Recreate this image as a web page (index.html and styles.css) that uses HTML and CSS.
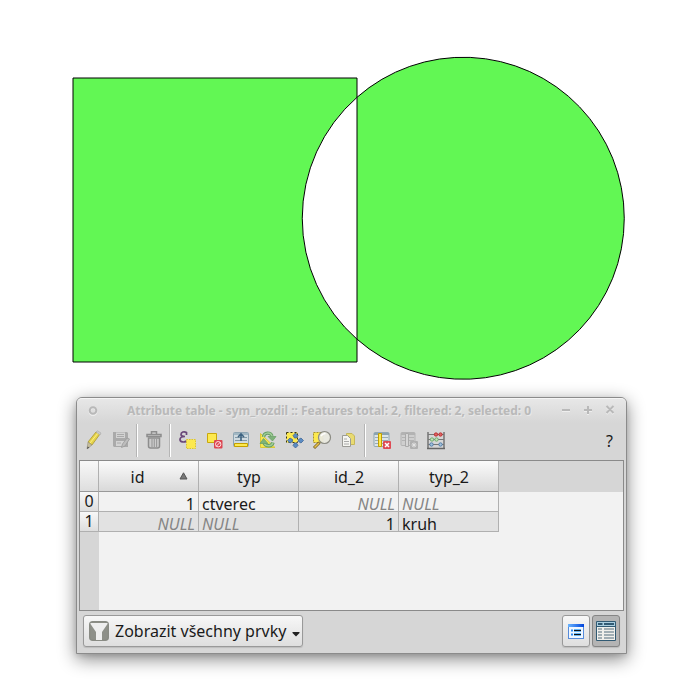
FILE: index.html
```
<!DOCTYPE html>
<html lang="cs">
<head>
<meta charset="utf-8">
<title>Attribute table</title>
<link rel="stylesheet" href="styles.css">
</head>
<body>
<svg class="map" width="700" height="397" viewBox="0 0 700 397">
  <path d="M73 78H357V97.300A161 161 0 0 0 357 339.200V362H73Z"/>
  <path d="M357 97.300A161 161 0 1 1 357 339.200Z"/>
</svg>
<section class="window">
  <header class="titlebar">
    <svg class="menu-dot" width="12" height="12"><circle cx="6" cy="6.500" r="3.500"/><circle class="ring" cx="6" cy="5.500" r="3.300"/></svg>
    <h1>Attribute table - sym_rozdil :: Features total: 2, filtered: 2, selected: 0</h1>
    <svg class="controls" width="56" height="12"><path class="lo" d="M2 6H10M24 6H32M28 2V10M46.500 2L53.500 9M53.500 2L46.500 9"/><path d="M2 5H10M24 5H32M28 1V9M46.500 1L53.500 8M53.500 1L46.500 8"/></svg>
  </header>
  <nav class="toolbar">
    <span class="tool"><svg width="20" height="20"><path d="M4 12L12 2L16 4L8 15Z" fill="#e4d34b" stroke="#aa9630" stroke-width=".8"/><path d="M6 13L14 3" stroke="#fff083"/><path d="M12 2L13.500 .8L17 3L16 5Z" fill="#ccc" stroke="#aaa" stroke-width=".6"/><path d="M4 12L8 15L3 19Z" fill="#c5bd9c" stroke="#8c876f" stroke-width=".5"/><path d="M3.500 16.500L5.500 17.500L3 19Z" fill="#555"/></svg></span>
    <span class="tool"><svg width="20" height="20"><path d="M2 2H16L17 3V17H3L2 16Z" fill="#aaa"/><path d="M5 2.500H14V8H5ZM5 11H14V16H5Z" fill="#d3d3d3"/><path d="M6 4.500H13M6 6.500H13M6 13H10" stroke="#aaa"/><path d="M16 8L18.500 9L14 16L10.500 17.500L11.500 14Z" fill="#bdbdbd" stroke="#999" stroke-width=".8"/></svg></span>
    <i class="sep"></i>
    <span class="tool"><svg width="20" height="20"><path d="M7.500 4V1.800H12.500V4M3 4.500H17V6.500H3Z" fill="none" stroke="#8d8d8d" stroke-width="1.500"/><path d="M4.500 8V16Q4.500 18 6.500 18H13.500Q15.500 18 15.500 16V8Z" fill="#ccc" stroke="#8d8d8d" stroke-width="1.500"/><path d="M8 9V17M10.300 9V17M12.600 9V17" stroke="#999" stroke-width="1.100"/></svg></span>
    <i class="sep"></i>
    <span class="tool"><svg width="20" height="20"><path d="M9.500 5V2.500C7 1 4 2 4 4.500C4 6 6 6.500 8 6.500C5 6.500 3 7.500 3 9.500C3 12.500 7.500 12.500 9.500 11" fill="none" stroke="#6a4879" stroke-width="1.700"/><path d="M9.500 9.500H18.500V18.500H9.500Z" fill="#fce94f" stroke="#dcc52c" stroke-dasharray="1.500 1"/></svg></span>
    <span class="tool"><svg width="20" height="20"><path d="M3.500 3.500H12.500V12.500H3.500Z" fill="#fce94f" stroke="#c9a80c"/><rect x="10" y="10" width="8.500" height="8.500" rx="1" fill="#dc4450"/><circle cx="14.200" cy="14.200" r="2.700" fill="none" stroke="#ffe2e2"/><path d="M12 16.500L16.500 12" stroke="#ffe2e2"/></svg></span>
    <span class="tool"><svg width="20" height="20"><rect x="2.500" y="2.500" width="15" height="14" rx="1" fill="#cfdae0" stroke="#8ea5b3"/><path d="M3 4H17" stroke="#a1b7c3" stroke-width="2"/><path d="M4 7.500H16M4 10.500H16" stroke="#8198a6"/><path d="M10 11V4M7 7L10 4L13 7" fill="none" stroke="#3d6381" stroke-width="1.600"/><path d="M3.500 13.500H16.500V16.500H3.500Z" fill="#fce94f" stroke="#c4a000"/></svg></span>
    <span class="tool"><svg width="20" height="20"><path d="M2.500 3.500V17.500H17Z" fill="#f8e650" stroke="#dac838"/><path d="M5.500 7C6 2 12.500 2 14 6M15 12.500C14 16.500 8 17 6 13" fill="none" stroke="#659f63" stroke-width="3.400"/><path d="M5.500 7C6 2 12.500 2 14 6M15 12.500C14 16.500 8 17 6 13" fill="none" stroke="#a1cc98" stroke-width="1.500"/><path d="M10 6.500H18L14.500 11ZM2 13.500L5.500 8.500L10 13.500Z" fill="#7eb27a" stroke="#659f63" stroke-width=".7"/></svg></span>
    <span class="tool"><svg width="20" height="20"><path d="M1.500 2.500H12.500V12.500H1.500Z" fill="#fce94f" stroke="#393510" stroke-dasharray="2 2"/><g fill="#5b8cc3" stroke="#375f90" stroke-width=".7"><path d="M10.500 3L13 5.500L11.500 8H9.500L8 5.500Z"/><path d="M10.500 18L13 15.500L11.500 13H9.500L8 15.500Z"/><path d="M2.500 10.500L5 8L7.500 9.500V11.500L5 13Z"/><path d="M18.500 10.500L16 8L13.500 9.500V11.500L16 13Z"/></g></svg></span>
    <span class="tool"><svg width="20" height="20"><path d="M1.500 2.500H11V12.500H1.500Z" fill="#fce94f" stroke="#a8942b" stroke-dasharray="2 1"/><path d="M7.500 12.500L2 18" stroke="#765e24" stroke-width="3"/><path d="M7 13L2.500 17.500" stroke="#e8c24b" stroke-width="1.600"/><circle cx="12.500" cy="7.500" r="6" fill="#e9e9df" fill-opacity=".94" stroke="#8b8b83" stroke-width="1.200"/><path d="M9 6Q10.500 3.500 13.500 3.500" fill="none" stroke="#fff" stroke-width="1.500"/></svg></span>
    <span class="tool"><svg width="20" height="20"><path d="M7.500 3.500H13L15.500 6V14.500H7.500Z" fill="#e9db72" stroke="#c6b85b"/><path d="M3.500 5.500H8.500L11.500 8.500V16.500H3.500Z" fill="#f5f5f1" stroke="#9b9b96"/><path d="M5 9H8M5 11.500H10M5 14H10" stroke="#aaa"/></svg></span>
    <i class="sep"></i>
    <span class="tool"><svg width="20" height="20"><rect x="2" y="2.500" width="15" height="14" rx="1" fill="#dce4e8" stroke="#91a7b4"/><path d="M2 4H17" stroke="#8ba3b1" stroke-width="2"/><path d="M3 7.500H16M3 10.500H16M3 13.500H16" stroke="#9aabb4"/><path d="M6.500 3.500H9.500V16.500H6.500Z" fill="#fce94f" stroke="#c4a000"/><rect x="11" y="11" width="8" height="8" rx="1" fill="#de4b54"/><path d="M13 13L17 17M17 13L13 17" stroke="#fff" stroke-width="1.500"/></svg></span>
    <span class="tool"><svg width="20" height="20"><rect x="2" y="2.500" width="14" height="13" rx="1" fill="#cfcfcf" stroke="#b3b3b3"/><path d="M2 4H16" stroke="#b3b3b3" stroke-width="2"/><path d="M3 7.500H15M3 10.500H15" stroke="#b3b3b3"/><path d="M6.500 3.500H9.500V16.500H6.500Z" fill="#d6d6d6" stroke="#aaa"/><rect x="11" y="11" width="8" height="8" rx="1" fill="#b0b0b0"/><path d="M15 12.500V17.500M12.500 15H17.500M13.300 13.300L16.700 16.700M16.700 13.300L13.300 16.700" stroke="#e4e4e4"/></svg></span>
    <span class="tool"><svg width="20" height="20"><path d="M2 2V18M18 2V18" stroke="#666" stroke-width="1.300"/><path d="M1 18.500H19" stroke="#666" stroke-width="1.500"/><path d="M2 4.500H18M2 9.500H18M2 14.500H18" stroke="#777"/><g fill="#df6464" stroke="#b52020" stroke-width=".8"><circle cx="10" cy="4.500" r="1.700"/><circle cx="14.500" cy="4.500" r="1.700"/></g><g fill="#c2dfbb" stroke="#5ca358" stroke-width=".8"><circle cx="6" cy="9.500" r="1.700"/><circle cx="10.500" cy="9.500" r="1.700"/></g><g fill="#a3c2dc" stroke="#3f6f9e" stroke-width=".8"><circle cx="5.500" cy="14.500" r="1.700"/><circle cx="14.500" cy="14.500" r="1.700"/></g></svg></span>
    <span class="help">?</span>
  </nav>
  <div class="grid">
    <div class="row head"><b></b><span>id<svg class="sort" width="9" height="8"><path d="M4.500 .8L8 7H1Z"/></svg></span><span>typ</span><span>id_2</span><span>typ_2</span></div>
    <div class="row"><b>0</b><span class="num">1</span><span>ctverec</span><span class="num null">NULL</span><span class="null">NULL</span></div>
    <div class="row alt"><b>1</b><span class="num null">NULL</span><span class="null">NULL</span><span class="num">1</span><span>kruh</span></div>
    <div class="gutter"></div>
  </div>
  <footer class="footer">
    <button class="btn filter"><svg width="20" height="20"><rect x=".75" y=".75" width="18.500" height="18.500" rx="3" fill="#8e9089" stroke="#898b84" stroke-width="1.500"/><path d="M1.500 2H18.500V3L13 11V19H7V11L1.500 3Z" fill="#eee"/></svg><span>Zobrazit všechny prvky</span><svg class="drop" width="8" height="6"><path d="M.5 1H7.500V2L4 5.500L.5 2Z" fill="#222"/></svg></button>
    <button class="btn view"><svg width="16" height="15"><defs><linearGradient id="bar"><stop stop-color="#69b4ff"/><stop offset="1" stop-color="#0044dc"/></linearGradient></defs><rect x=".5" y=".5" width="15" height="14" fill="#f0f7ff" stroke="#568bda"/><path d="M0 0H16V3H0Z" fill="url(#bar)"/><path d="M3 6.500H5M3 10.500H5" stroke="#2c87ef" stroke-width="2"/><path d="M6 6.500H13M6 10.500H13" stroke="#65b5f5" stroke-width="3"/><path d="M6 6.500H13M6 10.500H13" stroke="#111"/></svg></button>
    <button class="btn view active"><svg width="20" height="20"><path d="M.5 .5H19.500V19.500H.5Z" fill="#f0f0ec" stroke="#315a73"/><path d="M1 1H19V5H1Z" fill="#a9cee0"/><path d="M2 3H6.500M8 3H18" stroke="#315a73" stroke-width="2"/><path d="M1 5.500H19" stroke="#315a73"/><path d="M2 8H6M8 8H18M2 11H6M8 11H18M2 14H6M8 14H18M2 17H6M8 17H18" stroke="#526d7d" stroke-width="1.200"/></svg></button>
  </footer>
</section>
</body>
</html>
```
FILE: styles.css
```
* { box-sizing: border-box; }
body { margin: 0; width: 700px; height: 700px; overflow: hidden; background: #fff; font: 16px/20px "Noto Sans", sans-serif; color: #1a1a1a; }
svg { display: block; flex: none; }
.map path { fill: #62f754; stroke: #000; stroke-width: 1; }
.window { display: flex; flex-direction: column; width: 551px; height: 257px; margin-left: 76px; border: 1px solid #8b8b8b; border-radius: 6px 6px 0 0; background: #d6d6d6; box-shadow: 0 5px 18px rgba(0,0,0,.48), 0 2px 5px rgba(0,0,0,.1); }
.titlebar { display: flex; align-items: center; height: 25px; padding: 0 10px; border-top: 1px solid #f5f5f5; border-radius: 5px 5px 0 0; background: linear-gradient(#e7e7e7, #d6d6d6); }
.titlebar h1 { flex: 1; margin: 0 1px 0 0; text-align: center; white-space: nowrap; font: bold 12px/20px "Noto Sans", sans-serif; letter-spacing: -.03px; color: #b9b9b9; text-shadow: 1px 1px #e8e8e8; }
.menu-dot circle { fill: none; stroke: #eee; stroke-width: 2; }
.menu-dot .ring { stroke: #b8b8b8; }
.controls { fill: none; stroke: #b9b9b9; stroke-width: 2; }
.controls .lo { stroke: #eee; }
.toolbar { display: flex; align-items: center; height: 37px; padding: 0 9px 3px 3px; }
.tool { display: flex; justify-content: center; width: 27px; }
.sep { width: 2px; height: 33px; margin: 0 2px; border-left: 1px solid #b5b5b5; border-right: 1px solid #fff; }
.help { margin-left: auto; margin-right: 4px; padding-top: 1px; }
.grid { width: 545px; height: 151px; margin-left: 2px; border: 1px solid #8a8a8a; background: #f2f2f2; }
.row { display: grid; grid-template-columns: 19px repeat(4, 100px); grid-template-rows: 100%; height: 20px; }
.row > * { border-right: 1px solid #b0b0b0; border-bottom: 1px solid #b0b0b0; font-weight: normal; }
.row b { background: linear-gradient(#f8f8f8, #dedede); line-height: 19px; text-align: center; }
.row span { padding: 5px 3px 0; line-height: 14px; }
.row .num { text-align: right; }
.row .null { color: #858585; font-style: italic; }
.alt span { background: #e2e2e2; }
.head { height: 31px; background: #d6d6d6; }
.head > * { background: linear-gradient(#fbfbfb, #d9d9d9); border-bottom-color: #999; }
.head span { position: relative; padding: 6px 2px 0 3px; line-height: 20px; text-align: center; }
.head span:nth-child(2) { padding-right: 25px; }
.sort { position: absolute; right: 10px; top: 11px; fill: #777; stroke: #555; }
.gutter { width: 19px; height: 78px; background: #d6d6d6; }
.footer { display: flex; align-items: center; height: 42px; padding: 0 6px 2px; }
.btn { display: flex; align-items: center; justify-content: center; width: 28px; height: 32px; padding: 0; border: 1px solid #999; border-radius: 3px; background: linear-gradient(#f7f7f7, #dedede); color: inherit; font: inherit; box-shadow: 0 1px 1px rgba(0,0,0,.12); }
.filter { justify-content: flex-start; width: 220px; padding-left: 5px; margin-right: auto; }
.filter span { margin-left: 6px; white-space: nowrap; }
.drop { margin: 5px 0 0 6px; }
.active { margin-left: 2px; background: #b4b4b4; border-color: #858585; }
```
